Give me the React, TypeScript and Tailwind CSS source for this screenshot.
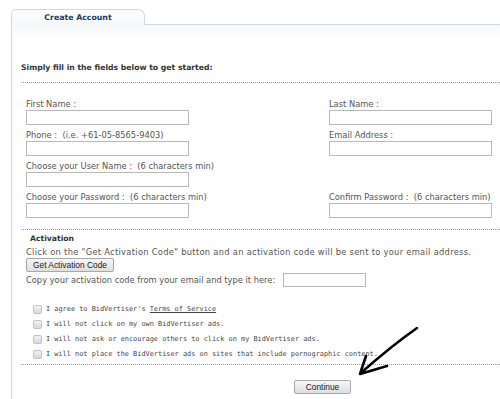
const verdana = { fontFamily: '"DejaVu Sans", Verdana, sans-serif' }

function Field({ label, hint }: { label: string; hint?: string }) {
  return (
    <div className="flex flex-col">
      <div className="h-[10px] leading-[14px] text-[8.3px] text-[#555] whitespace-nowrap">
        {label} :{hint && <span>&nbsp; {hint}</span>}
      </div>
      <input className="mt-[3px] mb-[3px] w-[163px] h-[15px] border border-[#b9b9b9] bg-white outline-none" />
    </div>
  )
}

function Check({ children }: { children: React.ReactNode }) {
  return (
    <div className="flex items-center h-[15px]">
      <span className="w-[9px] h-[9px] rounded-[2px] border border-[#c4c4c4] bg-gradient-to-b from-[#f2f2f2] to-[#d8d8d8]" />
      <span
        className="ml-[4px] text-[6.9px] text-[#444] whitespace-nowrap"
        style={{ fontFamily: '"DejaVu Sans Mono", monospace' }}
      >
        {children}
      </span>
    </div>
  )
}

function GrayButton({ children, w }: { children: React.ReactNode; w: string }) {
  return (
    <button
      className={`${w} h-[14px] flex items-center justify-center border border-[#a8a8a8] rounded-[2px] bg-gradient-to-b from-[#f6f6f6] to-[#dedede] text-[8.4px] text-[#222]`}
      style={{ fontFamily: '"Liberation Sans", Arial, sans-serif' }}
    >
      {children}
    </button>
  )
}

export default function App() {
  return (
    <div className="relative w-[500px] h-[399px] overflow-hidden bg-white" style={verdana}>
      {/* tab strip */}
      <div className="flex pt-[9px] pl-[11px]">
        <div className="w-[134px] h-[16px] border border-b-0 border-[#d3d8df] rounded-tl-[5px] rounded-tr-[7px] bg-gradient-to-b from-white to-[#f5f7f9] flex items-center justify-center">
          <span className="text-[7.8px] font-bold text-[#243b5e]">Create Account</span>
        </div>
        <div className="flex-1 border-b border-[#d3d8df]" />
      </div>

      {/* panel */}
      <div className="ml-[11px] border-l border-[#d3d8df] h-[400px] bg-gradient-to-b from-[#f5f7f9] via-white to-white bg-no-repeat [background-size:100%_28px]">
        <div className="pl-[9px] pt-[38px]">
          <div className="text-[7.7px] font-bold text-[#333] leading-[10px]">
            Simply fill in the fields below to get started:
          </div>
          <div className="mt-[9px] border-t border-dotted border-[#9a9a9a]" />

          <div className="flex pl-[5px] pt-[14px]">
            <div className="w-[303px]">
              <Field label="First Name" />
              <Field label="Phone" hint="(i.e. +61-05-8565-9403)" />
              <Field label="Choose your User Name" hint="(6 characters min)" />
              <Field label="Choose your Password" hint="(6 characters min)" />
            </div>
            <div>
              <Field label="Last Name" />
              <Field label="Email Address" />
              <div className="h-[31px]" />
              <Field label="Confirm Password" hint="(6 characters min)" />
            </div>
          </div>

          <div className="mt-[8px] border-t border-dotted border-[#9a9a9a]" />

          <div className="pl-[9px] mt-[4px] h-[10px] leading-[10px] text-[7.7px] font-bold text-[#333]">
            Activation
          </div>
          <div className="pl-[5px] mt-[3px] h-[10px] leading-[10px] text-[8.3px] tracking-[0.3px] text-[#555] whitespace-nowrap">
            Click on the "Get Activation Code" button and an activation code will be sent to your email address.
          </div>
          <div className="pl-[5px] mt-[1px]">
            <GrayButton w="w-[88px]">Get Activation Code</GrayButton>
          </div>
          <div className="pl-[5px] mt-[1px] flex items-center h-[14px]">
            <span className="text-[8.3px] text-[#555] whitespace-nowrap">
              Copy your activation code from your email and type it here:
            </span>
            <input className="ml-[8px] w-[83px] h-[14px] border border-[#b9b9b9] bg-white outline-none" />
          </div>

          <div className="pl-[12px] mt-[15px]">
            <Check>
              I agree to BidVertiser's <span className="underline">Terms of Service</span>
            </Check>
            <Check>I will not click on my own BidVertiser ads.</Check>
            <Check>I will not ask or encourage others to click on my BidVertiser ads.</Check>
            <Check>I will not place the BidVertiser ads on sites that include pornographic content.</Check>
          </div>

          <div className="mt-[2px] border-t border-dotted border-[#9a9a9a]" />

          <div className="pl-[273px] mt-[15px]">
            <GrayButton w="w-[57px]">Continue</GrayButton>
          </div>
        </div>
      </div>

      {/* hand-drawn arrow annotation */}
      <svg className="absolute left-0 top-0 pointer-events-none" width="500" height="399" viewBox="0 0 500 399">
        <path
          d="M417 328 C 400 340, 380 356, 362 372"
          fill="none"
          stroke="#000"
          strokeWidth="2.6"
          strokeLinecap="round"
        />
        <path
          d="M366 356 L 360 374 L 387 366"
          fill="none"
          stroke="#000"
          strokeWidth="2.6"
          strokeLinecap="round"
          strokeLinejoin="round"
        />
      </svg>
    </div>
  )
}
